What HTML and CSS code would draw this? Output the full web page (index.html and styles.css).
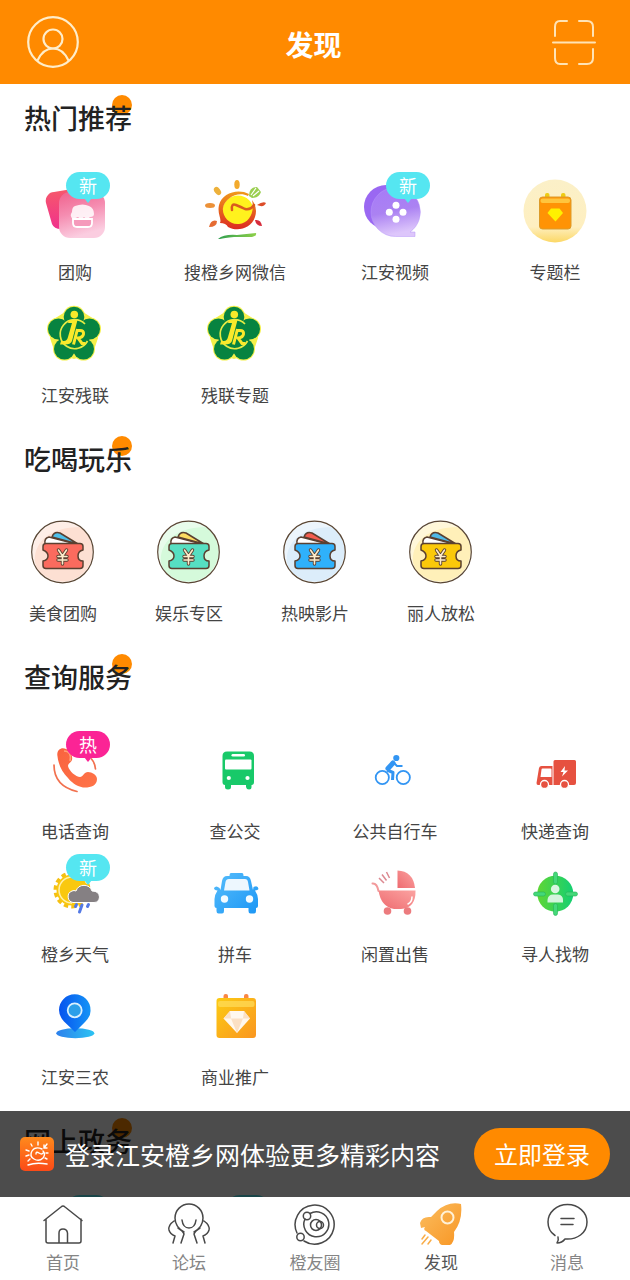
FILE: index.html
```html
<!DOCTYPE html>
<html lang="zh-CN">
<head>
<meta charset="utf-8">
<meta name="viewport" content="width=device-width, initial-scale=1">
<title>发现</title>
<link rel="stylesheet" href="styles.css">
</head>
<body>
<svg class="defs" aria-hidden="true">
  <defs>
    <linearGradient id="pinkBack" x1="0" y1="0" x2="0" y2="1"><stop offset="0" stop-color="#f6596b"/><stop offset="1" stop-color="#f0318c"/></linearGradient>
    <linearGradient id="pinkFront" x1="0" y1="0" x2=".3" y2="1"><stop offset="0" stop-color="#f0618c"/><stop offset=".5" stop-color="#f58db1"/><stop offset="1" stop-color="#fbcde0"/></linearGradient>
    <linearGradient id="sunRing" x1="0" y1="0" x2="0" y2="1"><stop offset="0" stop-color="#f09a1a"/><stop offset="1" stop-color="#dc2a22"/></linearGradient>
    <linearGradient id="grass" x1="0" y1="0" x2="1" y2="0"><stop offset="0" stop-color="#2f9e4f"/><stop offset="1" stop-color="#8ed04a"/></linearGradient>
    <linearGradient id="violet" x1="0" y1="0" x2=".2" y2="1"><stop offset="0" stop-color="#a67af8"/><stop offset=".55" stop-color="#ab82f2"/><stop offset="1" stop-color="#ddc6fb"/></linearGradient>
    <linearGradient id="cream" x1="0" y1="0" x2="0" y2="1"><stop offset="0" stop-color="#fbf0c8"/><stop offset=".75" stop-color="#feefc0"/><stop offset="1" stop-color="#fcd865"/></linearGradient>
    <linearGradient id="phoneFill" x1="0" y1="0" x2="1" y2="1"><stop offset="0" stop-color="#f9633f"/><stop offset="1" stop-color="#ff7448"/></linearGradient>
    <linearGradient id="taxiFill" x1="0" y1="0" x2="1" y2="1"><stop offset="0" stop-color="#57bdfb"/><stop offset="1" stop-color="#1b96f5"/></linearGradient>
    <linearGradient id="rose" x1="0" y1="1" x2="1" y2="0"><stop offset="0" stop-color="#ee6b70"/><stop offset="1" stop-color="#fba3a1"/></linearGradient>
    <linearGradient id="findFill" x1="0" y1="0" x2="1" y2="0"><stop offset="0" stop-color="#5fd635"/><stop offset="1" stop-color="#14cf72"/></linearGradient>
    <linearGradient id="pinFill" x1="0" y1="0" x2="1" y2="0"><stop offset="0" stop-color="#0753ee"/><stop offset="1" stop-color="#1494f6"/></linearGradient>
    <linearGradient id="poolFill" x1="0" y1="0" x2="1" y2="0"><stop offset="0" stop-color="#2c80ec"/><stop offset="1" stop-color="#2cc3f3"/></linearGradient>
    <linearGradient id="goldFill" x1="0" y1="0" x2="1" y2="1"><stop offset="0" stop-color="#fccb13"/><stop offset="1" stop-color="#fa9620"/></linearGradient>
    <linearGradient id="rocketFill" x1="0" y1="0" x2="1" y2="1"><stop offset="0" stop-color="#fbbd5f"/><stop offset="1" stop-color="#f89624"/></linearGradient>
    <linearGradient id="logoFill" x1="0" y1="0" x2="0" y2="1"><stop offset="0" stop-color="#ff8a1c"/><stop offset="1" stop-color="#fb4a17"/></linearGradient>

    <symbol id="emblem" viewBox="0 0 66 66">
      <g fill="#f4f04a"><circle cx="32" cy="16" r="11.300"/><circle cx="16.500" cy="28" r="11.500"/><circle cx="47.500" cy="28" r="11.500"/><circle cx="22.500" cy="48" r="11.500"/><circle cx="41.500" cy="48" r="11.500"/><path d="M23 11 12 18 8 37 13 52 32 58 51 52 56 37 52 18 41 11Z"/></g>
      <g fill="#078340"><circle cx="32" cy="16" r="10.300"/><circle cx="16.500" cy="28" r="10.500"/><circle cx="47.500" cy="28" r="10.500"/><circle cx="22.500" cy="48" r="10.500"/><circle cx="41.500" cy="48" r="10.500"/><circle cx="32" cy="34" r="16"/></g>
      <path d="M43 23A14.500 14.500 0 1 0 45.500 40" fill="none" stroke="#e5eb45" stroke-width="1.700"/>
      <circle cx="32.300" cy="13.500" r="3.800" fill="#f9e92b"/>
      <path d="M27 19H35.500L30 40Q28.500 43.500 23 43.500H18L19 40H22Q25 40 26 36L30 22H26Z" fill="#f9e92b"/>
      <path d="M34 29.500H38Q42 29.500 41.500 33T36 37L40 42.500H43.500M35.500 28L31.500 43.500" fill="none" stroke="#f9e92b" stroke-width="3"/>
    </symbol>

    <symbol id="ticket" viewBox="0 0 66 66">
      <circle cx="32.500" cy="33" r="31" fill="#fff"/>
      <path d="M50 8A30 30 0 0 1 15 57Q8 54 5 44C3 25 18 8 50 8Z" fill="var(--tint)"/>
      <circle cx="32.500" cy="33" r="30" fill="var(--tint)" opacity=".55"/>
      <circle cx="32.500" cy="33" r="30.800" fill="none" stroke="#594634" stroke-width="1.200"/>
      <g stroke="#5a4031" stroke-width="1.500" stroke-linejoin="round">
        <path d="M15 25Q14 19 19 18L46 25Z" fill="#fff"/>
        <path d="M22 18Q24 12 30 14L48 25Z" fill="var(--card)"/>
        <path d="M16 24.500H50Q53 24.500 53 27.500V31Q48 32 48 37T53 42V46.500Q53 49.500 50 49.500H16Q13 49.500 13 46.500V42Q18 41 18 37T13 31V27.500Q13 24.500 16 24.500Z" fill="var(--main)"/>
      </g>
      <path d="M28.500 31 32.500 37 36.500 31M28 37.500H37M28 41H37M32.500 37V45" fill="none" stroke="#5a4031" stroke-width="3.400" stroke-linecap="round"/>
      <path d="M28.500 31 32.500 37 36.500 31M28 37.500H37M28 41H37M32.500 37V45" fill="none" stroke="#fdeccb" stroke-width="1.600" stroke-linecap="round"/>
    </symbol>
  </defs>
</svg>

<div class="app">
  <header class="topbar">
    <button class="topbar-btn" type="button" aria-label="我的">
      <svg width="52" height="52" viewBox="0 0 52 52" fill="none" stroke="#ffedc9" stroke-width="2.200"><circle cx="26" cy="26" r="24.800"/><circle cx="26" cy="23" r="9.500"/><path d="M10.500 44.500Q16 32.500 26 32.500T41.500 44.500"/></svg>
    </button>
    <h1 class="topbar-title">发现</h1>
    <button class="topbar-btn topbar-btn-end" type="button" aria-label="扫一扫">
      <svg width="52" height="52" viewBox="0 0 52 52" fill="none" stroke="#ffe3b5" stroke-width="2" stroke-linecap="round"><path d="M7 20V11Q7 5 12 5H19M31 5H39Q45 5 45 11V20M45 33V42Q45 48 39 48H31M19 48H12Q7 48 7 42V33M5 26.500H47"/></svg>
    </button>
  </header>

  <div class="stage">
    <main class="content">
      <section>
        <h2 class="heading"><span class="heading-text">热门推荐</span></h2>
        <div class="grid">
          <a class="item" href="#"><span class="icon">
            <svg viewBox="0 0 66 66"><path d="M6 17Q8 14 12 14L30 11 33 48 19 51Q12 51 10 46L4 25Q3 20 6 17Z" fill="url(#pinkBack)"/><rect x="17" y="14" width="46" height="46" rx="11" fill="url(#pinkFront)"/><path d="M31 41H50V45Q50 49 46 49H35Q31 49 31 45Z" fill="#f59abb" stroke="#fff" stroke-width="1.800"/><path d="M33 28Q41 25 47 28Q52 30 52 36Q52 39 48 39Q45 42 42 39Q39 42 36 39L31 41Q27 38 30 34Q30 29 33 28Z" fill="#fff" fill-opacity=".85"/></svg>
            <span class="badge">新</span></span><span class="label">团购</span></a>
          <a class="item" href="#"><span class="icon">
            <svg viewBox="0 0 66 66"><circle cx="36" cy="33" r="15.500" fill="#fff21d"/><path d="M47 16C36 10 20 15 17 27C15 36 20 41 18 45Q24 45 26 49C35 54 49 51 53 39Q56 30 50 22C53 35 47 45 37 46C27 47 20 38 21 30C23 20 36 13 46 18Z" fill="url(#sunRing)"/><path d="M30 32Q29 25 34 27T43 31Q49 32 52 27" fill="none" stroke="#d95a1f" stroke-width="2.500" stroke-linecap="round"/><g><ellipse cx="35" cy="6.500" rx="2.700" ry="4.500" fill="#f2aa2d"/><ellipse cx="15.500" cy="13" rx="2.900" ry="4.500" transform="rotate(-38 15.500 13)" fill="#edb13b"/><ellipse cx="8" cy="27.500" rx="5" ry="2.500" fill="#ec9138"/><path d="M7 49Q9 41 15 43Q15 49 7 49Z" fill="#e56b32"/><path d="M55 27Q61 23 64 25Q62 30 55 27Z" fill="#dc4c29"/><path d="M53 42Q59 41 60 48Q54 48 53 42Z" fill="#d62b3b"/></g><path d="M47 18Q47 9 55 9L59 14Q57 20 50 20Z" fill="#9bcf51"/><path d="M49 17 54 10M51 18 57 13" stroke="#fff" stroke-width="1.200"/><path d="M16 61Q22 56 35 57L54 55Q55 58 50 59L32 59Q22 60 18 61Z" fill="url(#grass)"/></svg></span><span class="label">搜橙乡网微信</span></a>
          <a class="item" href="#"><span class="icon">
            <svg viewBox="0 0 66 66"><circle cx="24" cy="29" r="22" fill="#9a68f2"/><path d="M14 48 33 58 31 44Z" fill="#b189f4"/><path d="M33.500 9.500A24.500 24.500 0 1 0 33.500 58.500H53V54H48A24.500 24.500 0 0 0 33.500 9.500Z" fill="url(#violet)" stroke="#b897fa" stroke-opacity=".5"/><g fill="#fff"><circle cx="34" cy="27.300" r="3.500"/><circle cx="27.300" cy="34.300" r="3.500"/><circle cx="41" cy="34.300" r="3.500"/><circle cx="34" cy="41.300" r="3.500"/></g></svg>
            <span class="badge">新</span></span><span class="label">江安视频</span></a>
          <a class="item" href="#"><span class="icon">
            <svg viewBox="0 0 66 66"><circle cx="33" cy="33" r="31.500" fill="url(#cream)"/><rect x="23" y="15" width="4.500" height="6" rx="2" fill="#eecb14"/><rect x="39" y="15" width="4.500" height="6" rx="2" fill="#eecb14"/><rect x="17.500" y="19" width="31.500" height="32" rx="3" fill="#ff9305" stroke="#dc9b2a"/><rect x="18.500" y="20.500" width="29.500" height="4.500" rx="2" fill="#ffc53e"/><path d="M29 30.500H37.500L41 35 33.500 43.500 25.500 35Z" fill="#fff000"/></svg></span><span class="label">专题栏</span></a>
          <a class="item" href="#"><span class="icon"><svg><use href="#emblem"/></svg></span><span class="label">江安残联</span></a>
          <a class="item" href="#"><span class="icon"><svg><use href="#emblem"/></svg></span><span class="label">残联专题</span></a>
        </div>
      </section>

      <section>
        <h2 class="heading"><span class="heading-text">吃喝玩乐</span></h2>
        <div class="grid grid-five">
          <a class="item ticket-red" href="#"><span class="icon"><svg><use href="#ticket"/></svg></span><span class="label">美食团购</span></a>
          <a class="item ticket-green" href="#"><span class="icon"><svg><use href="#ticket"/></svg></span><span class="label">娱乐专区</span></a>
          <a class="item ticket-blue" href="#"><span class="icon"><svg><use href="#ticket"/></svg></span><span class="label">热映影片</span></a>
          <a class="item ticket-yellow" href="#"><span class="icon"><svg><use href="#ticket"/></svg></span><span class="label">丽人放松</span></a>
        </div>
      </section>

      <section>
        <h2 class="heading"><span class="heading-text">查询服务</span></h2>
        <div class="grid">
          <a class="item" href="#"><span class="icon">
            <svg viewBox="0 0 66 66"><path d="M15.300 18C15 12 20 10 24 12C28 13 31 19 30 23C29 26 26 26 26 29C27 34 34 40 38 40C41 40 42 35 46 35C50 35 55 38 55 42C55 49 48 51 41 50.500C34 49 29 45 26 41C20 35 16 27 15.300 18Z" fill="url(#phoneFill)"/><path d="M22 14Q30 14 28 24" fill="none" stroke="#ffa27b" stroke-width="1.500"/><path d="M12 28Q12 49 35 54.500M49.500 22Q53 26 53.500 32" fill="none" stroke="#f2714f" stroke-width="1.700" stroke-linecap="round"/></svg>
            <span class="badge badge-hot">热</span></span><span class="label">电话查询</span></a>
          <a class="item" href="#"><span class="icon">
            <svg viewBox="0 0 66 66"><path d="M25 14.500H47.500Q52 14.500 52 19V45Q52 48 49.500 48V50Q49.500 52.500 47 52.500T44 50V48H29V50Q29 52.500 26 52.500T23 50V48Q20.500 48 20.500 45V19Q20.500 14.500 25 14.500Z" fill="#18c969"/><rect x="23" y="22.500" width="26.500" height="10" rx="1" fill="#fff"/><rect x="29.500" y="17" width="13.500" height="2.600" rx="1.300" fill="#fff"/><circle cx="26.800" cy="41" r="2.100" fill="#fff"/><circle cx="45.500" cy="41" r="2.100" fill="#fff"/></svg></span><span class="label">查公交</span></a>
          <a class="item" href="#"><span class="icon">
            <svg viewBox="0 0 66 66" fill="none" stroke="#3295f3"><circle cx="20.300" cy="40.500" r="6.600" stroke-width="1.800"/><circle cx="41.300" cy="40.500" r="6.600" stroke-width="1.800"/><circle cx="34.300" cy="21" r="3.100" fill="#3295f3" stroke="none"/><path d="M31 26 26 31.500" stroke-width="5" stroke-linecap="round"/><path d="M25 33 31 35.500 30.500 43" stroke-width="3" stroke-linejoin="round"/><path d="M32 26 35 29H40.500" stroke-width="2"/></svg></span><span class="label">公共自行车</span></a>
          <a class="item" href="#"><span class="icon">
            <svg viewBox="0 0 66 66"><path d="M33 23H52.500Q54 23 54 24.500V46Q54 48 52 48H31.500V24.500Q31.500 23 33 23ZM19.500 29H30.500V48H16Q14.500 48 14.500 46L15.500 40 17 31Q17.500 29 19.500 29Z" fill="#e65140"/><path d="M20.500 31.500H28.500Q29.500 31.500 29.500 32.500V40H18.500L19.500 32.500Q19.500 31.500 20.500 31.500Z" fill="#fff"/><g fill="#e65140" stroke="#fff" stroke-width="1.300"><circle cx="22.500" cy="47.500" r="4"/><circle cx="42.500" cy="47.500" r="4"/></g><path d="M43 29 38.500 35H41.500L40 39.500 46 33.500H42.500Z" fill="#fff"/></svg></span><span class="label">快递查询</span></a>
          <a class="item" href="#"><span class="icon">
            <svg viewBox="0 0 66 66"><circle cx="30" cy="30" r="16.500" fill="none" stroke="#f5c013" stroke-width="4" stroke-dasharray="4.300 3.100"/><circle cx="30" cy="30" r="15.500" fill="#f9c80f"/><path d="M30 43A13 13 0 0 1 30 17" fill="none" stroke="#fff0ab" stroke-width="1.500"/><path d="M31 42.500A6 6 0 0 1 30 31Q32 30 34 31A8.500 8.500 0 0 1 50 31Q57 31 57.500 37Q57 42.500 52 42.500Z" fill="#858083" stroke="#fff" stroke-width="1"/><path d="M40 45 37.500 52M46.500 44.500 45.500 46.500M34.500 44.500 33.500 46.500" stroke="#5379e5" stroke-width="3" stroke-linecap="round"/></svg>
            <span class="badge">新</span></span><span class="label">橙乡天气</span></a>
          <a class="item" href="#"><span class="icon">
            <svg viewBox="0 0 66 66"><path d="M29 13H40Q41.500 13 41.500 16H44Q48 16 49 21L51 30 51.500 27Q56 25 56.500 29Q56 30 53 30.500Q56 35 56 39V46Q56 48 54 48V51Q54 53.500 52 53.500H48.500Q46.500 53.500 46.500 51V48H22V51Q22 53.500 20 53.500H16.500Q14.500 53.500 14.500 51V48Q12.500 48 12.500 46V39Q12.500 35 15.500 30.500Q12 30 12 28Q14 25 17.500 28L18.500 30 20 21Q21 16 25 16H27.500Q27.500 13 29 13Z" fill="url(#taxiFill)"/><path d="M27 19H43Q45.500 19 46 22L47.500 30.500H22L23.500 22Q24 19 27 19Z" fill="#edf7fe"/><circle cx="22.500" cy="39" r="3.700" fill="#f3fbff"/><circle cx="47.500" cy="39" r="3.700" fill="#f3fbff"/></svg></span><span class="label">拼车</span></a>
          <a class="item" href="#"><span class="icon">
            <svg viewBox="0 0 66 66"><path d="M35.500 10.500Q51 11 53 28H35.500Z" fill="url(#rose)"/><path d="M16.500 30.500H53.500Q54 48 39 49H32Q19 47 16.500 30.500Z" fill="url(#rose)"/><path d="M10.500 23.500Q15 23 16.500 31" fill="none" stroke="#f29a9b" stroke-width="2" stroke-linecap="round"/><circle cx="25.500" cy="51" r="3.800" fill="#ec7b7e"/><circle cx="45.500" cy="51" r="3.800" fill="#ec7b7e"/><path d="M17 18 22 23M20 14.500 24.500 20.500M24.500 12 27.500 18" stroke="#dc8991" stroke-width="1.500"/><path d="M50 37Q50 42 46 44" fill="none" stroke="#fff" stroke-width="1.500" stroke-linecap="round"/></svg></span><span class="label">闲置出售</span></a>
          <a class="item" href="#"><span class="icon">
            <svg viewBox="0 0 66 66"><circle cx="33.300" cy="33.700" r="18" fill="url(#findFill)"/><g fill="#44d879" stroke="#27b456" stroke-width=".6"><rect x="31.500" y="12" width="4" height="12" rx="2"/><rect x="31.500" y="43.500" width="4" height="12" rx="2"/><rect x="11.500" y="32" width="12" height="4" rx="2"/><rect x="43.500" y="32" width="12" height="4" rx="2"/></g><circle cx="33.200" cy="29" r="4.300" fill="#d9f6e0"/><path d="M25.500 42.500V40Q26 34.500 31 34.500H36Q41 35 41 40V42.500Z" fill="#d3f4dc"/></svg></span><span class="label">寻人找物</span></a>
          <a class="item" href="#"><span class="icon">
            <svg viewBox="0 0 66 66"><ellipse cx="33.300" cy="50.300" rx="19" ry="5" fill="url(#poolFill)"/><path d="M32.700 11.300A15.700 15.700 0 0 1 48.500 27Q49 33 43 39L33 49 22 38.500Q17 33 17 27A15.700 15.700 0 0 1 32.700 11.300Z" fill="url(#pinFill)"/><circle cx="32.700" cy="27.300" r="7" fill="#2b9fe9" stroke="#d9f0fe" stroke-width="1.800"/></svg></span><span class="label">江安三农</span></a>
          <a class="item" href="#"><span class="icon">
            <svg viewBox="0 0 66 66"><rect x="21.500" y="11" width="4.500" height="8" rx="2" fill="#fa8743"/><rect x="42" y="11" width="4.500" height="8" rx="2" fill="#fa8743"/><rect x="14.500" y="15" width="39.500" height="40" rx="3" fill="url(#goldFill)"/><rect x="16" y="18" width="36.500" height="6" rx="2" fill="#ffdd5b" opacity=".7"/><path d="M28 28H42L48 35.500 35 50 21.500 35.500Z" fill="#fff8ee"/><path d="M21.500 35.500H29L28 28ZM41 35.500 48 35.500 42 28ZM41 35.500 35 50 29 35.500Z" fill="#fbe0c4"/></svg></span><span class="label">商业推广</span></a>
        </div>
      </section>

      <section>
        <h2 class="heading"><span class="heading-text">网上政务</span></h2>
        <div class="grid">
          <a class="item" href="#"><span class="icon"><span class="badge"></span></span></a>
          <a class="item" href="#"><span class="icon"><span class="badge"></span></span></a>
        </div>
      </section>
    </main>

    <aside class="login">
      <svg class="login-logo" viewBox="0 0 34 34"><rect width="34" height="34" rx="5" fill="url(#logoFill)"/><g fill="none" stroke="#fff" stroke-width="1.400" stroke-linecap="round"><path d="M22 12Q15 9 12 14T14 22Q19 25 23 21Q26 17 23 14M16 17Q16 14 19 16T23 16M18 5V8M11 7 12 9M6 13 9 14M6 19 9 18M8 24 10 22M28 16H26M27 22 25 21M24 11 27 7M24 8V11H27"/><path d="M8 28Q16 25 27 27"/></g></svg>
      <p class="login-text">登录江安橙乡网体验更多精彩内容</p>
      <button class="login-btn" type="button">立即登录</button>
    </aside>
  </div>

  <nav class="tabs">
    <a class="tab" href="#"><svg viewBox="0 0 44 44"><path d="M3 17.500 20 4Q22 2 24 4L41 17.500M5 16V38Q5 40 7 40H38Q40 40 40 38V16M18 40V30Q18 26 22 26T26.500 30V40"/></svg><span>首页</span></a>
    <a class="tab" href="#"><svg viewBox="0 0 44 44"><path d="M17 29C10 25 8 20 8 15A14 14 0 0 1 36 15C36 20 34 25 27 29M15 17Q16 25 22 25T29 17M7 18Q1 22 2 27Q3 31 8 33L6 40M14 40 17 31Q16 28 11 25M37 18Q43 22 42 27Q41 31 36 33L38 40M30 40 27 31Q28 28 33 25"/></svg><span>论坛</span></a>
    <a class="tab" href="#"><svg viewBox="0 0 44 44"><path d="M4 30A19.500 19.500 0 1 1 11 38M12 16A12.500 12.500 0 1 0 17 10.500"/><circle cx="14" cy="13" r="3.700"/><circle cx="7.500" cy="34" r="3.700"/><circle cx="23" cy="22" r="5.500"/><circle cx="27" cy="22" r="3.500"/></svg><span>橙友圈</span></a>
    <a class="tab tab-on" href="#" aria-current="page"><svg viewBox="0 0 44 44"><path d="M42 1Q29 -2 18 8L12 14Q3 13 1 20L2 25 6 24Q4 27 7 28L20 38Q20 41 23 42H31Q36 39 35 29Q44 17 42 1Z" fill="url(#rocketFill)" stroke="none"/><circle cx="28.500" cy="14.500" r="6" stroke="#fff1d7" stroke-width="2"/><path d="M6 32 3 36M9 34 3 41M12 37 9 41" stroke="#f9ad48"/></svg><span>发现</span></a>
    <a class="tab" href="#"><svg viewBox="0 0 44 44"><path d="M13 34Q14 37 12 40Q17 40 20 36C32 37 42 30 42 19A19.500 17.500 0 0 0 3 19Q3 28 10 32.500M16 15.500H29M16 21.500H28"/></svg><span>消息</span></a>
  </nav>
</div>
</body>
</html>
```
FILE: styles.css
```css
* {
  box-sizing: border-box;
}

body {
  margin: 0;
  background: #fff;
  color: #444;
  font-family: "Noto Sans CJK SC", sans-serif;
}

h1, h2, p {
  margin: 0;
}

a {
  color: inherit;
  text-decoration: none;
}

button {
  border: 0;
  font: inherit;
}

.defs {
  position: absolute;
  width: 0;
  height: 0;
}

.app {
  display: flex;
  flex-direction: column;
  height: 100vh;
}

.topbar {
  display: grid;
  grid-template-columns: 1fr auto 1fr;
  align-items: center;
  flex: none;
  height: 84px;
  padding: 0 30px 0 27px;
  background: #ff8a00;
}

.topbar-btn {
  justify-self: start;
  display: flex;
  padding: 0;
  background: none;
}

.topbar-btn-end {
  justify-self: end;
}

.topbar-title {
  padding-top: 4px;
  color: #fff;
  font-size: 28px;
  font-weight: 700;
  line-height: 40px;
}

.stage {
  position: relative;
  flex: 1;
  min-height: 0;
}

.content {
  height: 100%;
  overflow-y: auto;
  scrollbar-width: none;
}

.heading {
  display: flex;
  align-items: center;
  height: 70px;
  padding: 0 24px 2px;
  color: #222;
  font-size: 27px;
  font-weight: 500;
  line-height: 28px;
}

.heading-text {
  position: relative;
  isolation: isolate;
}

.heading-text::before {
  content: "";
  position: absolute;
  z-index: -1;
  top: -9px;
  right: 0;
  width: 20px;
  height: 20px;
  border-radius: 50%;
  background: #ff8a00;
}

.grid {
  display: grid;
  grid-template-columns: repeat(4, 110px);
  justify-content: space-between;
  row-gap: 17px;
  padding: 24px 20px 18px;
}

.grid-five {
  grid-template-columns: repeat(5, 1fr);
  padding-right: 0;
  padding-left: 0;
}

.item {
  display: flex;
  flex-direction: column;
  align-items: center;
  gap: 16px;
}

.icon {
  position: relative;
  width: 66px;
  height: 66px;
}

.icon svg {
  display: block;
  width: 100%;
  height: 100%;
}

.label {
  font-size: 17px;
  line-height: 24px;
  white-space: nowrap;
}

.badge {
  position: absolute;
  top: -6px;
  left: 24px;
  width: 44px;
  height: 27px;
  border-radius: 14px;
  background: #55e6f1;
  color: #fff;
  font-size: 18px;
  line-height: 26px;
  text-align: center;
}

.badge::after {
  content: "";
  position: absolute;
  top: 26px;
  left: 18px;
  border: 4px solid transparent;
  border-top: 5px solid #55e6f1;
  border-bottom: 0;
}

.badge-hot {
  background: #fb2495;
}

.badge-hot::after {
  border-top-color: #fb2495;
}

.ticket-red {
  --tint: #fde0d3;
  --card: #4fc0ea;
  --main: #fb6b5e;
}

.ticket-green {
  --tint: #d5fadb;
  --card: #fbdc62;
  --main: #56dfc2;
}

.ticket-blue {
  --tint: #dcedfa;
  --card: #f45d50;
  --main: #2fb1fb;
}

.ticket-yellow {
  --tint: #fff0b9;
  --card: #4fb9e6;
  --main: #fbc90a;
}

.login {
  position: absolute;
  right: 0;
  bottom: 0;
  left: 0;
  display: flex;
  align-items: center;
  gap: 11px;
  height: 86px;
  padding: 0 20px;
  background: rgba(0, 0, 0, .7);
  color: #fff;
}

.login-logo {
  flex: none;
  width: 34px;
  height: 34px;
}

.login-text {
  flex: 1;
  font-size: 25px;
  line-height: 36px;
  white-space: nowrap;
}

.login-btn {
  height: 52px;
  padding: 0 20px;
  border-radius: 26px;
  background: #ff8a00;
  color: #fff;
  font-size: 24px;
  line-height: 52px;
}

.tabs {
  display: flex;
  flex: none;
  background: #fff;
}

.tab {
  display: flex;
  flex: 1;
  flex-direction: column;
  align-items: center;
  gap: 4px;
  padding: 6px 0 7px;
  color: #858585;
  font-size: 17px;
  line-height: 22px;
}

.tab svg {
  width: 44px;
  height: 44px;
  fill: none;
  stroke: #484848;
  stroke-width: 1.5;
  stroke-linecap: round;
  stroke-linejoin: round;
}

.tab-on {
  color: #555;
}
```
